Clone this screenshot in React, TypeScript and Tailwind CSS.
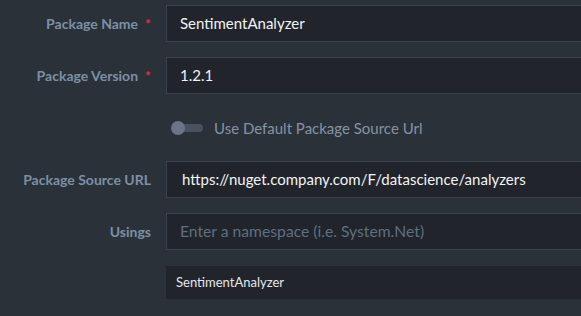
const font = "font-['Lato','Noto_Sans',sans-serif]";

function Label({ text, required }: { text: string; required?: boolean }) {
  return (
    <div className="w-[166px] shrink-0 pr-[15px] flex justify-end items-center text-[14px] font-bold text-[#7b90a5]">
      <span>{text}</span>
      {required && <span className="ml-[7px] text-[#d9314f]">*</span>}
    </div>
  );
}

function TextBox({ value, placeholder, pl = "pl-[13px]" }: { value?: string; placeholder?: string; pl?: string }) {
  return (
    <div
      className={`flex-1 h-[37px] -mr-[2px] flex items-center border border-[#3a4450] bg-[#21242b] ${pl} ${
        value ? "text-[15px] text-[#f1f3f5]" : "text-[15.7px] text-[#5f6f82]"
      }`}
    >
      {value ?? placeholder}
    </div>
  );
}

export default function App() {
  return (
    <div className={`w-[581px] h-[316px] overflow-hidden bg-[#2b3139] ${font}`}>
      <div className="pt-[5px] flex flex-col">
        <div className="flex h-[37px]">
          <Label text="Package Name" required />
          <TextBox value="SentimentAnalyzer" />
        </div>
        <div className="flex h-[37px] mt-[15px]">
          <Label text="Package Version" required />
          <TextBox value="1.2.1" />
        </div>
        <div className="flex h-[20px] mt-[24px] items-center">
          <div className="w-[166px] shrink-0" />
          <div className="relative w-[32px] h-[14px] ml-[5px] flex items-center">
            <div className="absolute left-[5px] right-0 h-[8px] rounded-full bg-[#4a5262]" />
            <div className="absolute left-0 w-[14px] h-[14px] rounded-full bg-[#6b7589]" />
          </div>
          <span className="ml-[11px] text-[15px] text-[#8593a5]">Use Default Package Source Url</span>
        </div>
        <div className="flex h-[37px] mt-[23px]">
          <Label text="Package Source URL" />
          <TextBox value="https://nuget.company.com/F/datascience/analyzers" pl="pl-[15px]" />
        </div>
        <div className="flex h-[37px] mt-[15px]">
          <Label text="Usings" />
          <TextBox placeholder="Enter a namespace (i.e. System.Net)" pl="pl-[13px]" />
        </div>
        <div className="flex h-[33px] mt-[16px]">
          <div className="w-[166px] shrink-0" />
          <div className="flex-1 flex items-center bg-[#21242b] pl-[10px] text-[13px] text-[#e4e8ec]">
            SentimentAnalyzer
          </div>
        </div>
      </div>
    </div>
  );
}
